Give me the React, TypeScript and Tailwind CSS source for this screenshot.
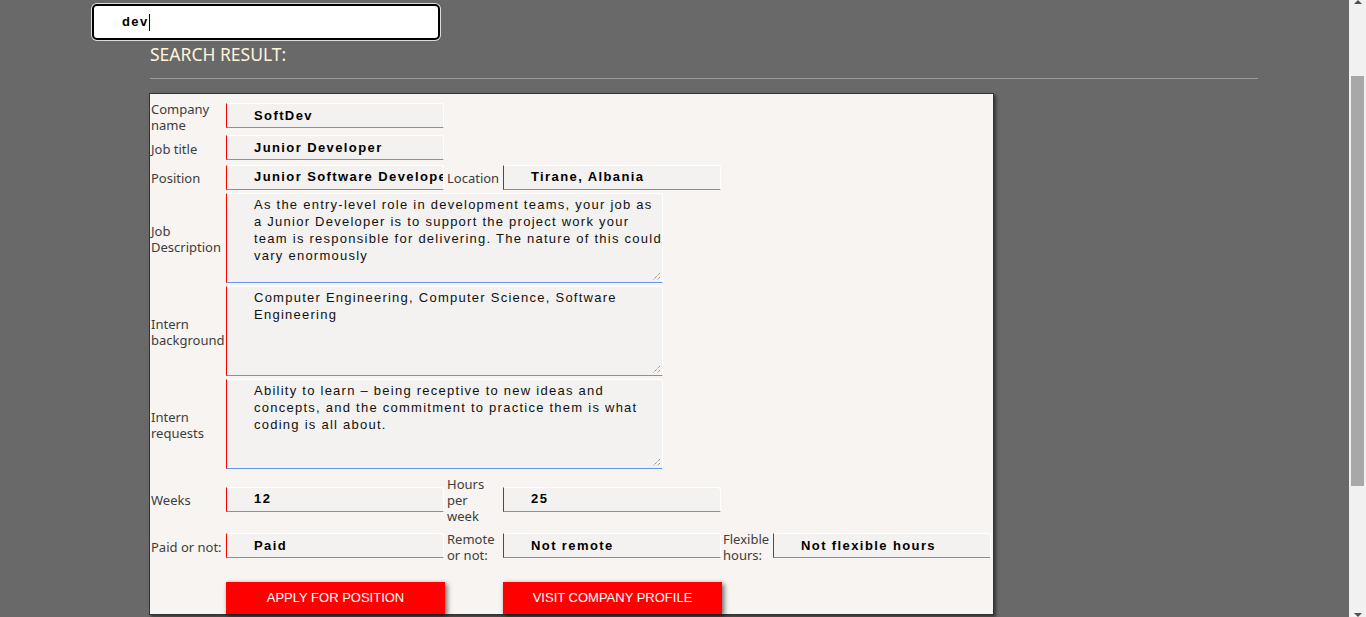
import React from "react";

const LBL = "font-['Noto_Sans',sans-serif] text-[13px] leading-[16px] text-[#3d3d3d] whitespace-nowrap";

function Field({ value, w = "w-[218px]" }: { value: string; w?: string }) {
  return (
    <div
      className={`${w} h-[25px] shrink-0 bg-[#f3f2f0] border-l border-l-[#ff0000] border-b border-b-[#6495ed] border-t border-t-white border-r border-r-white rounded-tr-[3px] pl-[27px] flex items-center overflow-hidden whitespace-nowrap font-['Liberation_Sans',Arial,sans-serif] font-bold text-[13px] tracking-[1.4px] text-black`}
    >
      {value}
    </div>
  );
}

function Area({ lines }: { lines: string[] }) {
  return (
    <div className="relative w-[437px] h-[90px] shrink-0 bg-[#f3f2f0] border-l border-l-[#ff0000] border-b border-b-[#6495ed] border-t border-t-white border-r border-r-white rounded-tr-[3px] pl-[27px] pt-[2px] font-['Liberation_Sans',Arial,sans-serif] text-[13px] leading-[17px] tracking-[1.25px] text-[#111]">
      {lines.map((l, i) => (
        <div key={i} className="whitespace-nowrap">
          {l}
        </div>
      ))}
      <svg className="absolute right-[1px] bottom-[1px]" width="10" height="10" viewBox="0 0 10 10">
        <path d="M9 2 L2 9 M9 6 L6 9" stroke="#6d6d6d" strokeWidth="1" strokeDasharray="1 1" />
      </svg>
    </div>
  );
}

function Label({ children, w = "w-[76px]", pl = "pl-[1px]" }: { children: React.ReactNode; w?: string; pl?: string }) {
  return <div className={`${w} shrink-0 ${LBL} ${pl} pt-[2px]`}>{children}</div>;
}

export default function App() {
  return (
    <div className="h-[617px] w-full flex overflow-hidden bg-[#696969]">
      <div className="flex-1 min-w-0">
        <div className="pt-[4px] pl-[92px]">
          <div className="w-[348px] h-[36px] border-2 border-black rounded-[5px] bg-white ring-1 ring-[#dcdcdc] flex items-center pl-[28px] font-['Liberation_Sans',Arial,sans-serif] font-bold text-[13px] tracking-[1.4px] text-black">
            <span>dev</span>
            <span className="w-[1px] h-[17px] bg-black" />
          </div>
        </div>
        <div className="ml-[150px] mt-[2px] font-['Noto_Sans',sans-serif] text-[17.5px] leading-[24px] text-[#fff5d8]">
          SEARCH RESULT:
        </div>
        <div className="ml-[150px] mt-[12px] w-[1108px] h-[1px] bg-[#9a9a9a]" />
        <div className="ml-[149px] mt-[14px] w-[845px] border border-[#333] bg-[#f7f4f1] shadow-[2px_2px_3px_rgba(0,0,0,0.5)] pt-[5px]">
          <div className="h-[33px] flex items-center">
            <Label>
              Company
              <br />
              name
            </Label>
            <Field value="SoftDev" />
          </div>
          <div className="h-[31px] flex items-center">
            <Label>Job title</Label>
            <Field value="Junior Developer" />
          </div>
          <div className="h-[28px] flex items-center">
            <Label>Position</Label>
            <Field value="Junior Software Developer" />
            <Label w="w-[59px]" pl="pl-[3px]">Location</Label>
            <Field value="Tirane, Albania" />
          </div>
          <div className="h-[93px] flex items-center">
            <Label>
              Job
              <br />
              Description
            </Label>
            <Area
              lines={[
                "As the entry-level role in development teams, your job as",
                "a Junior Developer is to support the project work your",
                "team is responsible for delivering. The nature of this could",
                "vary enormously",
              ]}
            />
          </div>
          <div className="h-[93px] flex items-center">
            <Label>
              Intern
              <br />
              background
            </Label>
            <Area lines={["Computer Engineering, Computer Science, Software", "Engineering"]} />
          </div>
          <div className="h-[93px] flex items-center">
            <Label>
              Intern
              <br />
              requests
            </Label>
            <Area
              lines={[
                "Ability to learn \u2013 being receptive to new ideas and",
                "concepts, and the commitment to practice them is what",
                "coding is all about.",
              ]}
            />
          </div>
          <div className="mt-[4px] h-[50px] flex items-center">
            <Label>Weeks</Label>
            <Field value="12" />
            <Label w="w-[59px]" pl="pl-[3px]">
              Hours
              <br />
              per
              <br />
              week
            </Label>
            <Field value="25" />
          </div>
          <div className="h-[43px] flex items-center">
            <Label>Paid or not:</Label>
            <Field value="Paid" />
            <Label w="w-[59px]" pl="pl-[3px]">
              Remote
              <br />
              or not:
            </Label>
            <Field value="Not remote" />
            <Label w="w-[52px]" pl="pl-[2px]">
              Flexible
              <br />
              hours:
            </Label>
            <Field value="Not flexible hours" />
          </div>
          <div className="mt-[15px] h-[32px] flex pl-[76px]">
            <button className="w-[219px] h-[32px] bg-[#ff0000] text-white font-['Liberation_Sans',Arial,sans-serif] text-[13px] shadow-[2px_2px_5px_rgba(0,0,0,0.6)]">
              APPLY FOR POSITION
            </button>
            <button className="ml-[58px] w-[219px] h-[32px] bg-[#ff0000] text-white font-['Liberation_Sans',Arial,sans-serif] text-[13px] shadow-[2px_2px_5px_rgba(0,0,0,0.6)]">
              VISIT COMPANY PROFILE
            </button>
          </div>
        </div>
      </div>
      <div className="w-[17px] shrink-0 h-[617px] bg-[#f1f1f1] flex flex-col">
        <div className="h-[4px] flex justify-center">
          <svg width="8" height="4" viewBox="0 0 8 4">
            <path d="M0 4 L4 0 L8 4 Z" fill="#505050" />
          </svg>
        </div>
        <div className="mt-[72px] ml-[2px] w-[13px] h-[410px] bg-[#a8a8a8]" />
        <div className="flex-1" />
        <div className="h-[4px] flex justify-center">
          <svg width="8" height="4" viewBox="0 0 8 4">
            <path d="M0 0 L8 0 L4 4 Z" fill="#505050" />
          </svg>
        </div>
      </div>
    </div>
  );
}
